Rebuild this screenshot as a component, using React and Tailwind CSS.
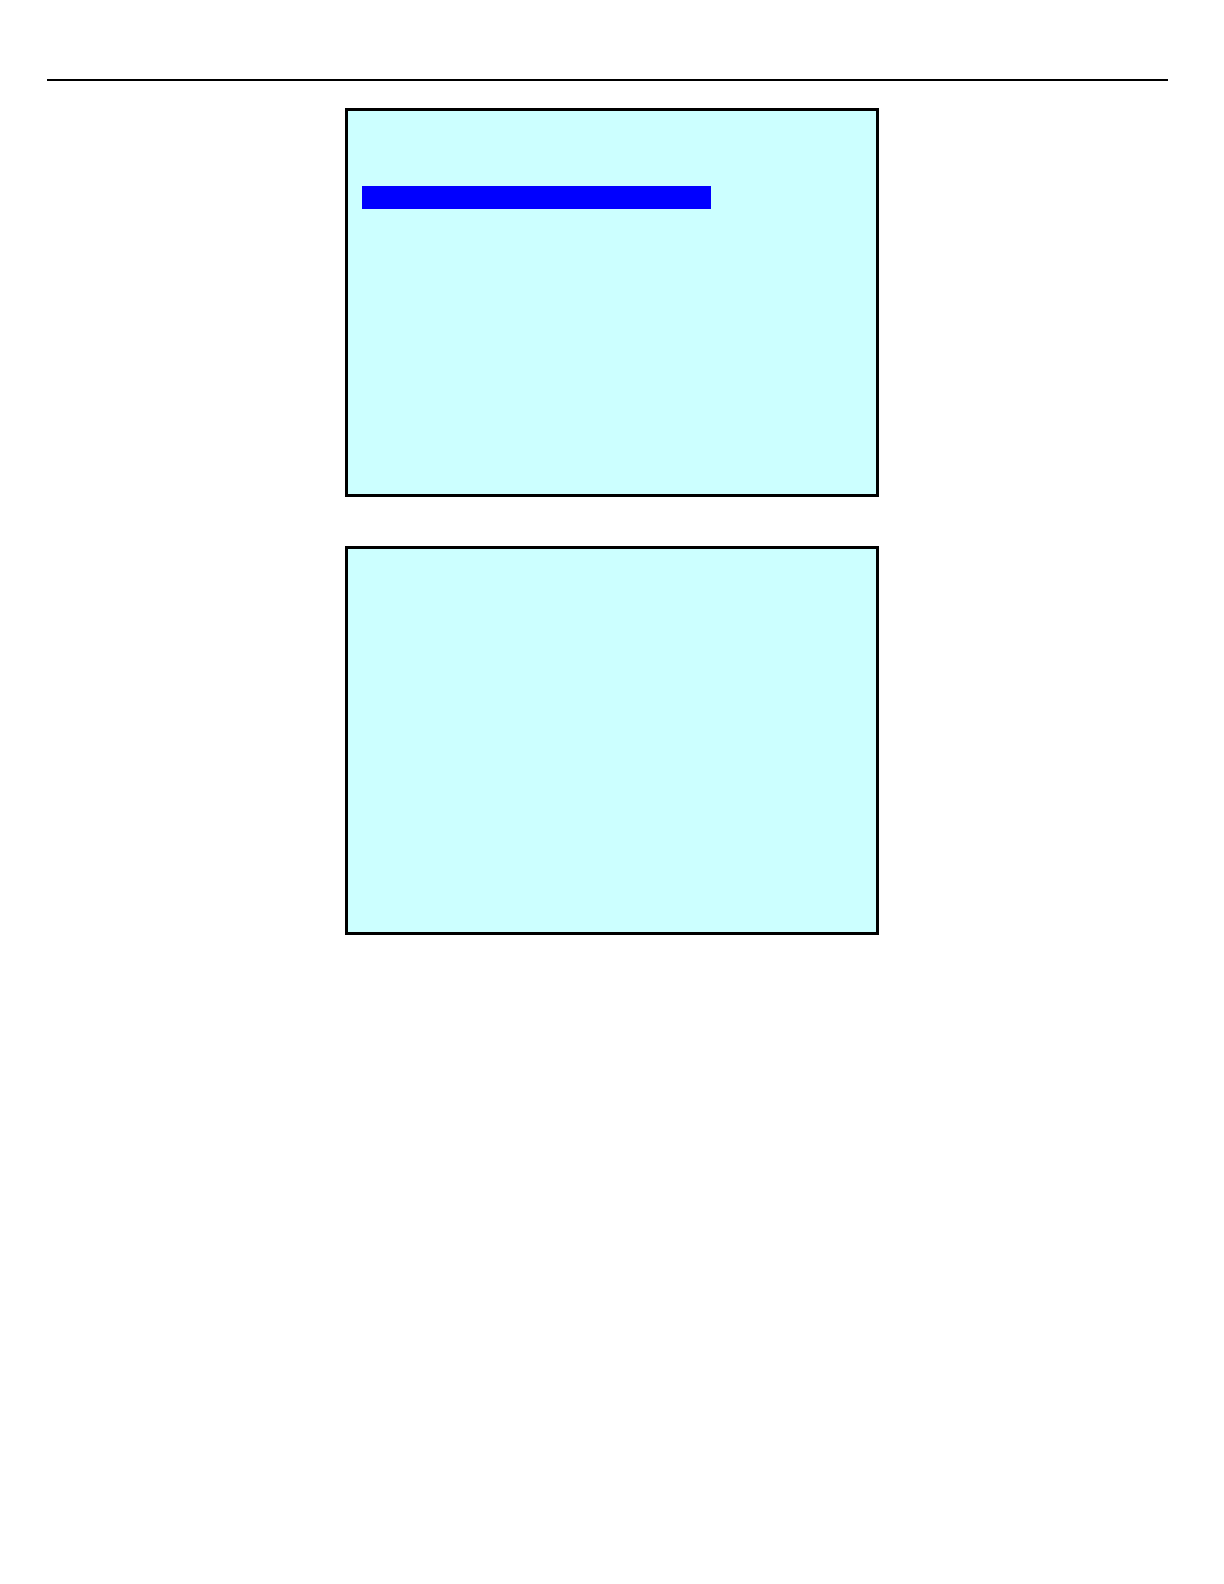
import React from 'react';

const Screen = ({ children }) => {
  return (
    <section className="w-full max-w-[534px] h-[389px] border-3 border-black bg-[#ccffff] px-3.5 pt-[75px]">
      {children}
    </section>
  );
};

const App = () => {
  return (
    <div className="min-h-screen bg-white pt-[79px]">
      <hr className="ml-[47px] mr-14 border-t-2 border-black" />
      <main className="mt-[27px] flex flex-col items-center gap-[49px]">
        <Screen>
          {/* highlighted row */}
          <div className="h-[23px] w-full max-w-[349px] bg-[#0000ff]" />
        </Screen>
        <Screen />
      </main>
    </div>
  );
};

export default App;
